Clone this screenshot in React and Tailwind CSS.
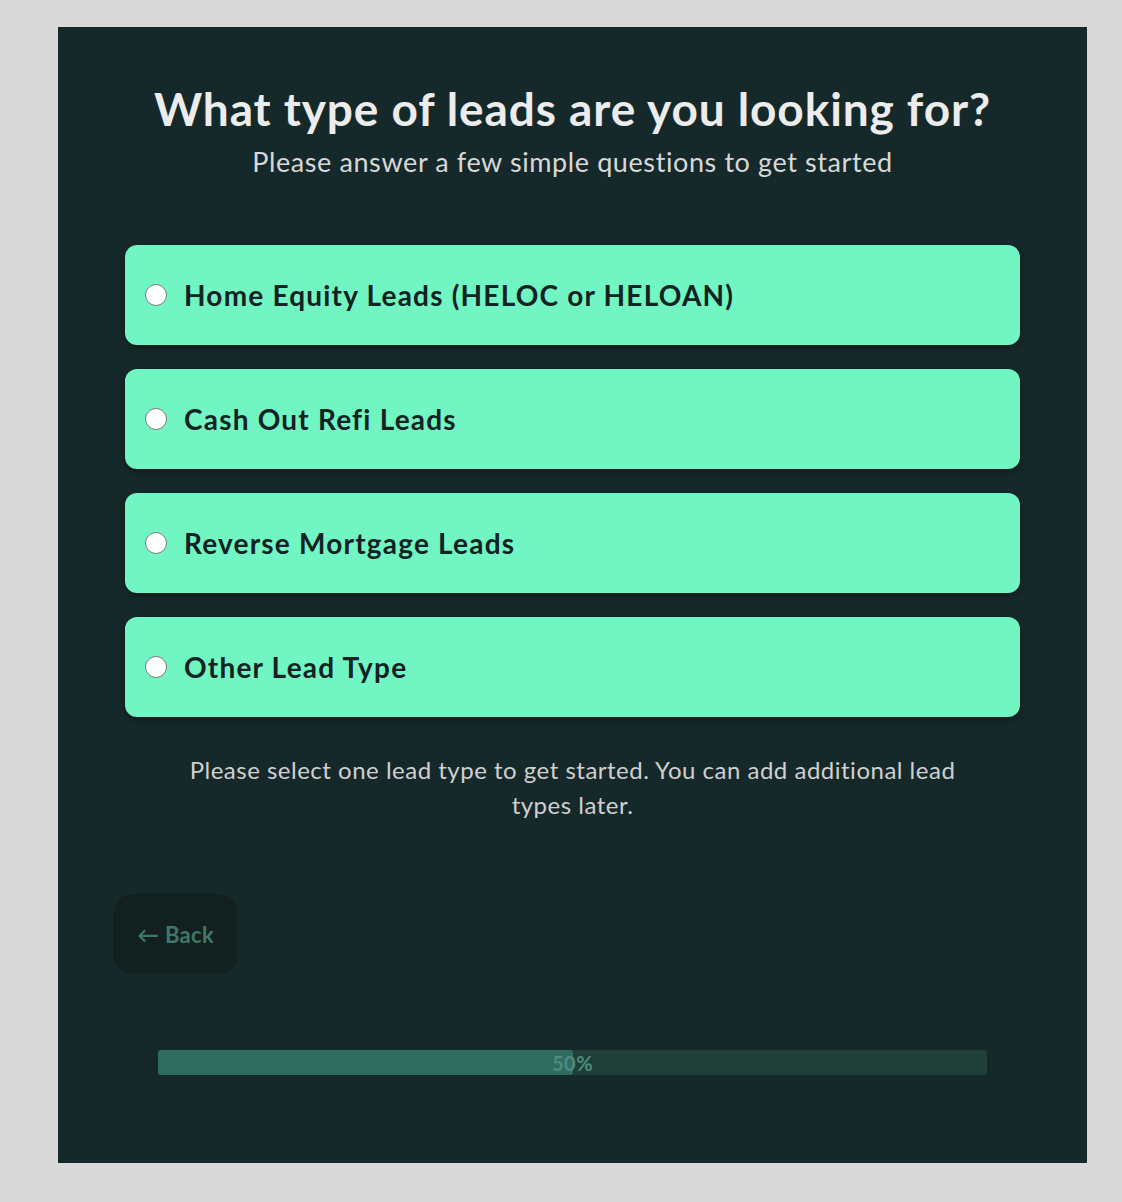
import React from 'react'

const leadTypes = [
    'Home Equity Leads (HELOC or HELOAN)',
    'Cash Out Refi Leads',
    'Reverse Mortgage Leads',
    'Other Lead Type',
]

const App = () => {
    return (
        <div className="min-h-[1202px] bg-[#d9d9d9] pl-[58px] pt-[27px] pb-[39px] font-['Lato',sans-serif]">
            <div className="w-[1029px] bg-[#16292a] pt-[55px] pb-[88px]">
                <h1 className="text-center text-[46px] leading-[53px] tracking-[0.9px] font-bold text-[#ececec]">
                    What type of leads are you looking for?
                </h1>
                <p className="mt-[11px] text-center text-[27px] leading-[32px] tracking-[0.6px] text-[#d8d8d8]">
                    Please answer a few simple questions to get started
                </p>

                <div className="mt-[67px] px-[67px] flex flex-col gap-[24px]">
                    {leadTypes.map((label, i) => (
                        <label
                            key={i}
                            className="flex items-center h-[100px] rounded-[12px] bg-[#71f5c2] pl-[20px] shadow-[0_3px_6px_rgba(0,0,0,0.35)] cursor-pointer"
                        >
                            <span className="w-[22px] h-[22px] rounded-full bg-white border border-[#7a7a7a] shrink-0"></span>
                            <span className="ml-[17px] text-[28px] tracking-[1.2px] font-bold text-[#132222]">{label}</span>
                        </label>
                    ))}
                </div>

                <p className="mt-[35px] mx-auto w-[800px] text-center text-[24px] leading-[35px] tracking-[0.5px] text-[#d0d0d0]">
                    Please select one lead type to get started. You can add additional lead types later.
                </p>

                <div className="mt-[72px] pl-[55px]">
                    <button className="w-[125px] h-[80px] rounded-[20px] bg-[#12211f] text-[22px] tracking-[0.3px] font-bold text-[#407868]">
                        ← Back
                    </button>
                </div>

                <div className="mt-[76px] px-[100px]">
                    <div className="relative h-[25px] rounded-[3px] bg-[#1f3f39]">
                        <div className="h-full w-1/2 rounded-[3px] bg-[#2f6b5f]"></div>
                        <span className="absolute inset-0 flex items-center justify-center text-[20px] tracking-[0.5px] font-bold text-[#4d8c7e]">
                            50%
                        </span>
                    </div>
                </div>
            </div>
        </div>
    )
}

export default App
